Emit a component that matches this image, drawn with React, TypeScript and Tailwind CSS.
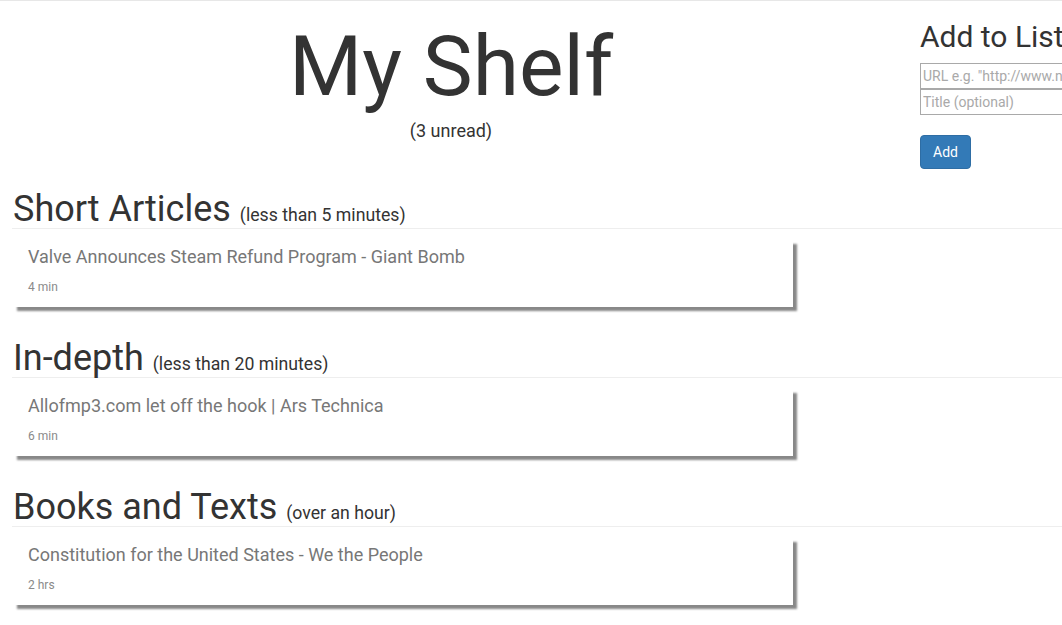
const sections = [
  { name: "Short Articles", note: "(less than 5 minutes)", title: "Valve Announces Steam Refund Program - Giant Bomb", time: "4 min" },
  { name: "In-depth", note: "(less than 20 minutes)", title: "Allofmp3.com let off the hook | Ars Technica", time: "6 min" },
  { name: "Books and Texts", note: "(over an hour)", title: "Constitution for the United States - We the People", time: "2 hrs" },
];

const Section = ({ name, note, title, time }: { name: string; note: string; title: string; time: string }) => {
  return (
    <div className="pl-[12px] mb-[32px]">
      <div className="border-b border-[#eee]">
        <h1 className="pl-[1px] text-[36px] leading-[38px] text-[#333]">
          {name} <small className="text-[17.7px] leading-none text-[#333]">{note}</small>
        </h1>
      </div>

      <div className="mt-[11px] ml-[1px] w-[780px] h-[67px] bg-white pt-[7px] pl-[15px] shadow-[4px_4px_2px_#888]">
        <p className="text-[18px] leading-[20px] text-[#777]">{title}</p>
        <p className="mt-[12px] text-[12px] leading-[17px] text-[#8a8a8a]">{time}</p>
      </div>
    </div>
  );
};

const App = () => {
  return (
    <div className="w-full h-[625px] overflow-hidden bg-white border-t border-[#e7e7e7] font-['Roboto',sans-serif]">

      <div className="flex">
        <div className="w-[902px] shrink-0 text-center">
          <h1 className="mt-[16px] text-[84px] leading-[99px] text-[#333]">My Shelf</h1>
          <p className="mt-[4px] text-[18px] leading-[22px] text-[#333]">(3 unread)</p>
        </div>

        <div className="ml-[18px] w-[240px] shrink-0">
          <h2 className="mt-[19px] mb-[10px] text-[30px] leading-[33px] text-[#333] whitespace-nowrap">Add to List</h2>
          <input type="text" placeholder={'URL e.g. "http://www.nytimes.com"'} className="block w-[220px] h-[26px] px-[2px] border border-[#a9a9a9] text-[14px] placeholder:text-[#a9a9a9] outline-none" />
          <input type="text" placeholder="Title (optional)" className="block w-[220px] h-[26px] px-[2px] border border-[#a9a9a9] text-[14px] placeholder:text-[#a9a9a9] outline-none" />
          <button type="button" className="mt-[20px] h-[34px] px-[12px] rounded-[4px] bg-[#337ab7] border border-[#2e6da4] text-white text-[14px]">
            Add
          </button>
        </div>
      </div>

      <div className="mt-[21px]">
        {sections.map(s => (
          <Section key={s.name} {...s} />
        ))}
      </div>

    </div>
  );
};

export default App;
